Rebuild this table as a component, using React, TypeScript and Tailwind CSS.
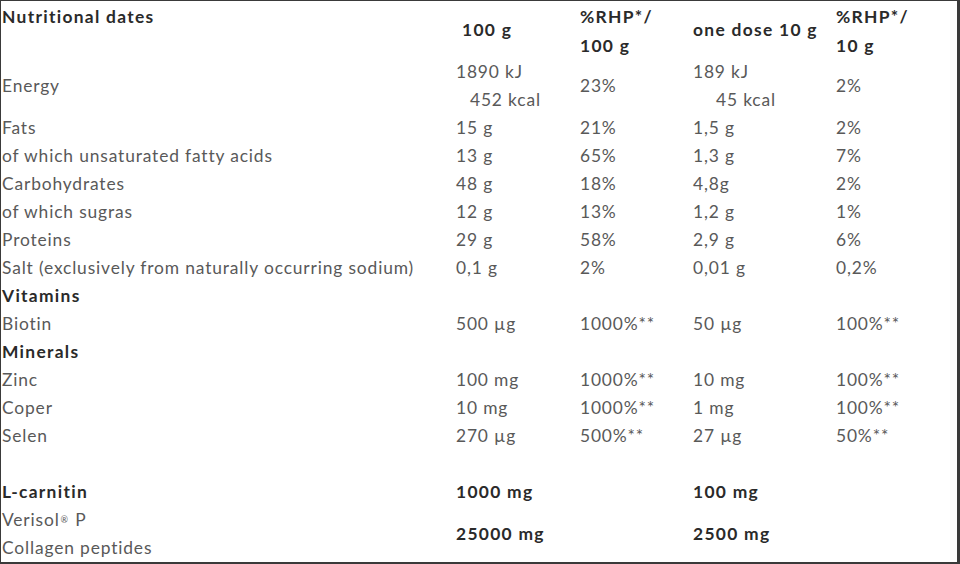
import React from "react";

const rows: { label: string; a: string; b: string; c: string; d: string; bold?: boolean }[] = [
  { label: "Fats", a: "15 g", b: "21%", c: "1,5 g", d: "2%" },
  { label: "of which unsaturated fatty acids", a: "13 g", b: "65%", c: "1,3 g", d: "7%" },
  { label: "Carbohydrates", a: "48 g", b: "18%", c: "4,8g", d: "2%" },
  { label: "of which sugras", a: "12 g", b: "13%", c: "1,2 g", d: "1%" },
  { label: "Proteins", a: "29 g", b: "58%", c: "2,9 g", d: "6%" },
  { label: "Salt (exclusively from naturally occurring sodium)", a: "0,1 g", b: "2%", c: "0,01 g", d: "0,2%" },
  { label: "Vitamins", a: "", b: "", c: "", d: "", bold: true },
  { label: "Biotin", a: "500 µg", b: "1000%**", c: "50 µg", d: "100%**" },
  { label: "Minerals", a: "", b: "", c: "", d: "", bold: true },
  { label: "Zinc", a: "100 mg", b: "1000%**", c: "10 mg", d: "100%**" },
  { label: "Coper", a: "10 mg", b: "1000%**", c: "1 mg", d: "100%**" },
  { label: "Selen", a: "270 µg", b: "500%**", c: "27 µg", d: "50%**" },
  { label: "", a: "", b: "", c: "", d: "" },
  { label: "L-carnitin", a: "1000 mg", b: "", c: "100 mg", d: "", bold: true },
];

const grid = "grid grid-cols-[454px_124px_113px_143px_1fr]";

export default function App() {
  return (
    <div
      className="w-[960px] h-[564px] bg-white border-t border-l border-r-[3px] border-b-[2px] border-[#3a3a3a] overflow-hidden text-[17.4px] text-[#595959] pl-[1px] tracking-[0.85px]"
      style={{ fontFamily: "Lato, 'Open Sans', sans-serif" }}
    >
      {/* header */}
      <div className={`${grid} h-[57px] font-bold text-[#2a2a2a] tracking-[1.3px]`}>
        <div className="leading-[29px] pt-[1px]">Nutritional dates</div>
        <div className="flex items-center pl-[6px]">100 g</div>
        <div className="flex flex-col leading-[29px] pt-[1px]">
          <span>%RHP*/</span>
          <span>100 g</span>
        </div>
        <div className="flex items-center">one dose 10 g</div>
        <div className="flex flex-col leading-[29px] pt-[1px]">
          <span>%RHP*/</span>
          <span>10 g</span>
        </div>
      </div>
      {/* energy */}
      <div className={`${grid} h-[56px] leading-[28px]`}>
        <div className="flex items-center">Energy</div>
        <div className="flex flex-col">
          <span>1890 kJ</span>
          <span className="pl-[14px]">452 kcal</span>
        </div>
        <div className="flex items-center">23%</div>
        <div className="flex flex-col">
          <span>189 kJ</span>
          <span className="pl-[23px]">45 kcal</span>
        </div>
        <div className="flex items-center">2%</div>
      </div>
      {rows.map((r, i) => (
        <div
          key={i}
          className={`${grid} h-[28px] leading-[28px] ${r.bold ? "font-bold text-[#2a2a2a] tracking-[1.3px]" : ""}`}
        >
          <div className="whitespace-nowrap">{r.label}</div>
          <div>{r.a}</div>
          <div>{r.b}</div>
          <div>{r.c}</div>
          <div>{r.d}</div>
        </div>
      ))}
      <div className={`${grid} h-[56px] leading-[28px]`}>
        <div className="flex flex-col">
          <span>
            Verisol<sup className="text-[9px] relative -top-[3px] px-[1px]">®</sup> P
          </span>
          <span>Collagen peptides</span>
        </div>
        <div className="flex items-center font-bold text-[#2a2a2a] tracking-[1.3px]">25000 mg</div>
        <div></div>
        <div className="flex items-center font-bold text-[#2a2a2a] tracking-[1.3px]">2500 mg</div>
        <div></div>
      </div>
    </div>
  );
}
